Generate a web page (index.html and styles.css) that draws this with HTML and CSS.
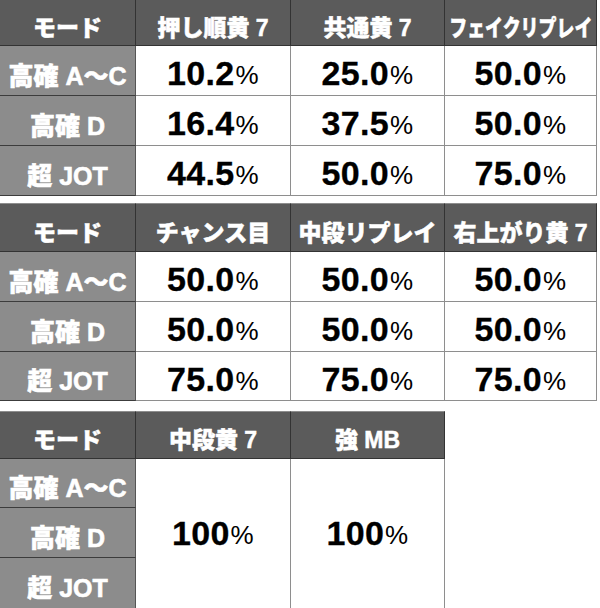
FILE: index.html
```html
<!DOCTYPE html>
<html lang="ja">
<head>
<meta charset="utf-8">
<title>モード別 当選率</title>
<link rel="stylesheet" href="styles.css">
</head>
<body>
<div class="page">
  <div class="grid t1">
    <div class="c head">モード</div>
    <div class="c head">押し順黄 7</div>
    <div class="c head">共通黄 7</div>
    <div class="c head"><span class="narrow">フェイクリプレイ</span></div>

    <div class="c mode">高確 A～C</div>
    <div class="c val">10.2<span class="pct">%</span></div>
    <div class="c val">25.0<span class="pct">%</span></div>
    <div class="c val">50.0<span class="pct">%</span></div>

    <div class="c mode">高確 D</div>
    <div class="c val">16.4<span class="pct">%</span></div>
    <div class="c val">37.5<span class="pct">%</span></div>
    <div class="c val">50.0<span class="pct">%</span></div>

    <div class="c mode">超 JOT</div>
    <div class="c val">44.5<span class="pct">%</span></div>
    <div class="c val">50.0<span class="pct">%</span></div>
    <div class="c val">75.0<span class="pct">%</span></div>
  </div>

  <div class="grid t2">
    <div class="c head">モード</div>
    <div class="c head">チャンス目</div>
    <div class="c head">中段リプレイ</div>
    <div class="c head">右上がり黄 7</div>

    <div class="c mode">高確 A～C</div>
    <div class="c val">50.0<span class="pct">%</span></div>
    <div class="c val">50.0<span class="pct">%</span></div>
    <div class="c val">50.0<span class="pct">%</span></div>

    <div class="c mode">高確 D</div>
    <div class="c val">50.0<span class="pct">%</span></div>
    <div class="c val">50.0<span class="pct">%</span></div>
    <div class="c val">50.0<span class="pct">%</span></div>

    <div class="c mode">超 JOT</div>
    <div class="c val">75.0<span class="pct">%</span></div>
    <div class="c val">75.0<span class="pct">%</span></div>
    <div class="c val">75.0<span class="pct">%</span></div>
  </div>

  <div class="grid t3">
    <div class="c head">モード</div>
    <div class="c head">中段黄 7</div>
    <div class="c head">強 MB</div>

    <div class="c mode r1">高確 A～C</div>
    <div class="c val merged m1">100<span class="pct">%</span></div>
    <div class="c val merged m2">100<span class="pct">%</span></div>
    <div class="c mode r2">高確 D</div>
    <div class="c mode r3">超 JOT</div>
  </div>
</div>
</body>
</html>
```

FILE: styles.css
```css
html, body {
  margin: 0;
  padding: 0;
  background: #ffffff;
}

.page {
  width: 600px;
  height: 608px;
  overflow: hidden;
  font-family: "Liberation Sans", "Noto Sans CJK JP", sans-serif;
}

.grid {
  display: grid;
  grid-template-columns: 136px 155px 154px 152px;
  width: 597px;
}

.t1 {
  grid-template-rows: 46px 50px 50px 50px;
}

.t2 {
  margin-top: 7px;
  grid-template-rows: 49px 50px 50px 49px;
}

.t3 {
  margin-top: 10px;
  grid-template-columns: 136px 155px 154px;
  width: 445px;
  grid-template-rows: 48px 49px 50px 50px;
}

.c {
  box-sizing: border-box;
  display: flex;
  align-items: center;
  justify-content: center;
  white-space: nowrap;
  border-right: 1px solid #8e8e8e;
  border-bottom: 1px solid #8e8e8e;
  padding-top: 6px;
}

.head {
  background: #5b5b5b;
  color: #ffffff;
  font-weight: 900;
  font-size: 23px;
  -webkit-text-stroke: 0.5px #ffffff;
  border-right-color: #333333;
  border-bottom-color: #333333;
}

.t2 .head, .t3 .head {
  border-top: 1px solid #8e8e8e;
}

.narrow {
  display: inline-block;
  transform: scaleX(0.78);
}

.mode {
  background: #8c8c8c;
  color: #ffffff;
  font-weight: 900;
  font-size: 25px;
  -webkit-text-stroke: 0.6px #ffffff;
  border-right-color: #555555;
  border-bottom-color: #3c3c3c;
}

.val {
  background: #ffffff;
  color: #000000;
  font-weight: bold;
  font-size: 34px;
  letter-spacing: 0.3px;
  -webkit-text-stroke: 0.3px #000000;
}

.pct {
  display: inline-block;
  font-weight: normal;
  font-size: 26px;
  margin-left: 1px;
  padding-top: 4px;
  -webkit-text-stroke: 0;
}

.merged {
  padding-top: 0;
}

.t3 .r1 { grid-column: 1; grid-row: 2; }
.t3 .r2 { grid-column: 1; grid-row: 3; }
.t3 .r3 { grid-column: 1; grid-row: 4; border-bottom: none; }
.t3 .m1 { grid-column: 2; grid-row: 2 / 5; border-bottom: none; }
.t3 .m2 { grid-column: 3; grid-row: 2 / 5; border-bottom: none; }
```
